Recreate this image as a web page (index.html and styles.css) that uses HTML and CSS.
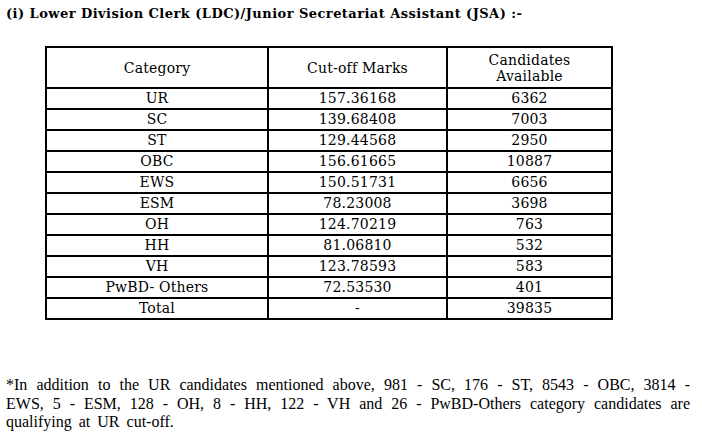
FILE: index.html
```html
<!DOCTYPE html>
<html>
<head>
<meta charset="utf-8">
<link rel="stylesheet" href="styles.css">
</head>
<body>
<div class="page">
  <h1 class="title">(i) Lower Division Clerk (LDC)/Junior Secretariat Assistant (JSA) :-</h1>
  <table class="cutoff">
    <colgroup>
      <col class="c1"><col class="c2"><col class="c3">
    </colgroup>
    <thead>
      <tr><th>Category</th><th>Cut-off Marks</th><th>Candidates<br>Available</th></tr>
    </thead>
    <tbody>
      <tr><td>UR</td><td>157.36168</td><td>6362</td></tr>
      <tr><td>SC</td><td>139.68408</td><td>7003</td></tr>
      <tr><td>ST</td><td>129.44568</td><td>2950</td></tr>
      <tr><td>OBC</td><td>156.61665</td><td>10887</td></tr>
      <tr><td>EWS</td><td>150.51731</td><td>6656</td></tr>
      <tr><td>ESM</td><td>78.23008</td><td>3698</td></tr>
      <tr><td>OH</td><td>124.70219</td><td>763</td></tr>
      <tr><td>HH</td><td>81.06810</td><td>532</td></tr>
      <tr><td>VH</td><td>123.78593</td><td>583</td></tr>
      <tr><td>PwBD- Others</td><td>72.53530</td><td>401</td></tr>
      <tr><td>Total</td><td>-</td><td>39835</td></tr>
    </tbody>
  </table>
  <p class="note">*In addition to the UR candidates mentioned above, 981 - SC, 176 - ST, 8543 - OBC, 3814 - EWS, 5 - ESM, 128 - OH, 8 - HH, 122 - VH and 26 - PwBD-Others category candidates are qualifying at UR cut-off.</p>
</div>
</body>
</html>
```
FILE: styles.css
```css
html, body {
  margin: 0;
  padding: 0;
  background: #fff;
}
.page {
  padding: 5px 12px 0 6px;
  color: #000;
}
.title {
  margin: 0;
  font-family: "DejaVu Serif", serif;
  font-weight: bold;
  font-size: 13px;
  letter-spacing: 0.45px;
  line-height: 17px;
}
.cutoff {
  margin: 24px 0 0 39px;
  border-collapse: collapse;
  font-family: "DejaVu Serif", serif;
  font-size: 14px;
  letter-spacing: 0.2px;
  border: 2px solid #000;
}
.c1 { width: 222px; }
.c2 { width: 179px; }
.c3 { width: 165px; }
.cutoff th, .cutoff td {
  border: 2px solid #000;
  text-align: center;
  padding: 0;
}
.cutoff th {
  font-weight: normal;
  height: 39px;
  line-height: 16px;
}
.cutoff td {
  height: 19px;
  line-height: 17px;
}
.note {
  margin: 56px 0 0 0;
  font-family: "Liberation Serif", serif;
  font-size: 16px;
  word-spacing: 3px;
  line-height: 18.5px;
  text-align: justify;
}
```
